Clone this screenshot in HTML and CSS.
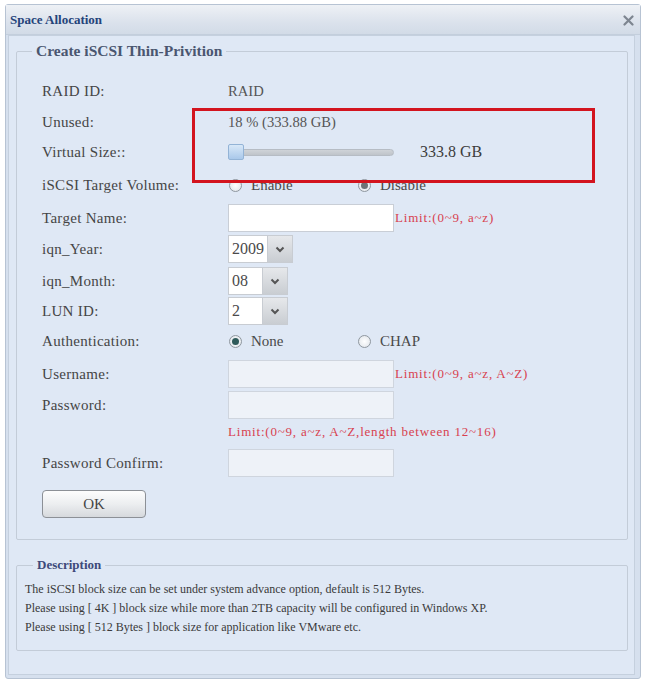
FILE: index.html
```html
<!DOCTYPE html>
<html>
<head>
<meta charset="utf-8">
<link rel="stylesheet" href="styles.css">
</head>
<body>
<div class="dialog">
  <div class="titlebar">
    <span class="title">Space Allocation</span>
    <span class="close">
      <svg width="11" height="11" viewBox="0 0 11 11"><path d="M1.5 1.5 L9.5 9.5 M9.5 1.5 L1.5 9.5" stroke="#7d8590" stroke-width="2.2" stroke-linecap="round"/></svg>
    </span>
  </div>
  <div class="panel">
    <fieldset class="box main">
      <legend>Create iSCSI Thin-Privition</legend>
      <div class="row r1"><span class="label">RAID ID:</span><span class="val">RAID</span></div>
      <div class="row r2"><span class="label">Unused:</span><span class="val">18 % (333.88 GB)</span></div>
      <div class="row r3"><span class="label">Virtual Size::</span>
        <span class="slider"><span class="track"></span><span class="thumb"></span></span>
        <span class="size">333.8 GB</span>
      </div>
      <div class="row r4"><span class="label">iSCSI Target Volume:</span>
        <span class="radios">
          <span class="opt"><span class="radio"></span>Enable</span>
          <span class="opt"><span class="radio on grey"></span>Disable</span>
        </span>
      </div>
      <div class="row r5"><span class="label">Target Name:</span><span class="input white"></span><span class="limit">Limit:(0~9, a~z)</span></div>
      <div class="row r6"><span class="label">iqn_Year:</span>
        <span class="select year"><span class="sv">2009</span><span class="arrow"><svg width="10" height="7" viewBox="0 0 10 7"><path d="M1.5 1.5 L5 5 L8.5 1.5" fill="none" stroke="#555" stroke-width="2"/></svg></span></span>
      </div>
      <div class="row r7"><span class="label">iqn_Month:</span>
        <span class="select small"><span class="sv">08</span><span class="arrow"><svg width="10" height="7" viewBox="0 0 10 7"><path d="M1.5 1.5 L5 5 L8.5 1.5" fill="none" stroke="#555" stroke-width="2"/></svg></span></span>
      </div>
      <div class="row r8"><span class="label">LUN ID:</span>
        <span class="select small"><span class="sv">2</span><span class="arrow"><svg width="10" height="7" viewBox="0 0 10 7"><path d="M1.5 1.5 L5 5 L8.5 1.5" fill="none" stroke="#555" stroke-width="2"/></svg></span></span>
      </div>
      <div class="row r9"><span class="label">Authentication:</span>
        <span class="radios">
          <span class="opt"><span class="radio on teal"></span>None</span>
          <span class="opt"><span class="radio"></span>CHAP</span>
        </span>
      </div>
      <div class="row r10"><span class="label">Username:</span><span class="input pale"></span><span class="limit">Limit:(0~9, a~z, A~Z)</span></div>
      <div class="row r11"><span class="label">Password:</span><span class="input pale"></span></div>
      <div class="row r12"><span class="label"></span><span class="limit nl">Limit:(0~9, a~z, A~Z,length between 12~16)</span></div>
      <div class="row r13"><span class="label">Password Confirm:</span><span class="input pale"></span></div>
      <div class="btnrow"><span class="okbtn">OK</span></div>
    </fieldset>
    <fieldset class="box desc">
      <legend>Description</legend>
      <p>The iSCSI block size can be set under system advance option, default is 512 Bytes.</p>
      <p>Please using [ 4K ] block size while more than 2TB capacity will be configured in Windows XP.</p>
      <p>Please using [ 512 Bytes ] block size for application like VMware etc.</p>
    </fieldset>
  </div>
  <div class="annot"></div>
</div>
</body>
</html>
```
FILE: styles.css
```css
html, body {
  margin: 0;
  padding: 0;
  background: #ffffff;
}
body {
  font-family: "Liberation Serif", "Times New Roman", serif;
  color: #4a4a4a;
}
.dialog {
  position: relative;
  margin: 4px 0 0 5px;
  width: 634px;
  height: 673px;
  border: 1px solid #b7c3d3;
  border-radius: 3px;
  background: #d6e0ee;
  box-sizing: content-box;
}
.titlebar {
  height: 29px;
  display: flex;
  align-items: center;
  justify-content: space-between;
  padding: 0 6px 0 4px;
  background: linear-gradient(#eef1f5, #dbe2ec 60%, #d2dbe7);
  border-bottom: 1px solid #c3cedc;
}
.title {
  font-weight: bold;
  font-size: 13px;
  color: #24437a;
}
.close {
  display: flex;
  align-items: center;
  margin-top: 2px;
}
.panel {
  margin: 0 5px 0 2px;
  height: 640px;
  border: 1px solid #c5d0de;
  background: #dfe8f5;
  padding: 7px 6px 0 7px;
  box-sizing: border-box;
  display: flex;
  flex-direction: column;
}
.box {
  margin: 0;
  border: 1px solid #c3ccd8;
  border-radius: 2px;
  min-width: 0;
}
.box legend {
  font-weight: bold;
  font-size: 13px;
  line-height: 16px;
  color: #3b4b6e;
  padding: 0 4px;
}
.main {
  padding: 16px 0 21px 25px;
}
.main legend {
  margin-left: -10px;
  font-size: 15.5px;
  color: #4a5670;
}
.desc {
  margin-top: 17px;
  padding: 7px 8px 13px 8px;
}
.desc legend {
  margin-left: 8px;
  color: #3d4a7a;
}
.desc p {
  margin: 0;
  font-size: 12px;
  line-height: 19px;
  color: #3a3a3a;
}
.row {
  display: flex;
  align-items: center;
  font-size: 15px;
}
.label {
  width: 186px;
  flex: none;
  color: #454545;
  letter-spacing: 0.3px;
}
.val { color: #555; font-size: 14.6px; }
.r1 { height: 32px; }
.r2 { height: 30px; }
.r3 { height: 30px; }
.r4 { height: 36px; }
.r5 { height: 30px; }
.r6 { height: 32px; }
.r7 { height: 32px; }
.r8 { height: 28px; }
.r9 { height: 32px; }
.r10 { height: 34px; }
.r11 { height: 28px; }
.r12 { height: 26px; }
.r13 { height: 36px; }
.slider {
  position: relative;
  width: 166px;
  height: 16px;
  display: flex;
  align-items: center;
}
.track {
  width: 166px;
  height: 7px;
  border-radius: 4px;
  background: linear-gradient(#cfd3d8, #bfc4ca);
  border: 1px solid #b6bcc4;
  box-sizing: border-box;
}
.thumb {
  position: absolute;
  left: 0;
  top: 0;
  width: 16px;
  height: 16px;
  border: 1px solid #93b3d6;
  border-radius: 2px;
  background: linear-gradient(#d8e8f8, #a9c8ea);
  box-sizing: border-box;
}
.size {
  margin-left: 26px;
  font-size: 16px;
  color: #3c3c3c;
}
.radios {
  display: flex;
  align-items: center;
}
.opt {
  display: flex;
  align-items: center;
  width: 129px;
  color: #4a4a4a;
  font-size: 15px;
}
.radio {
  width: 11px;
  height: 11px;
  border: 1px solid #8f979f;
  border-radius: 50%;
  background: radial-gradient(#ffffff, #dde2e8);
  margin-right: 9px;
  margin-left: 1px;
  position: relative;
  flex: none;
}
.radio.on::after {
  content: "";
  position: absolute;
  left: 2px;
  top: 2px;
  width: 7px;
  height: 7px;
  border-radius: 50%;
}
.radio.grey::after { background: #6e7478; }
.radio.teal::after { background: #2f5b5b; }
.input {
  width: 166px;
  height: 28px;
  box-sizing: border-box;
  border: 1px solid #c9ced6;
  flex: none;
}
.input.white { background: #ffffff; }
.input.pale { background: #eef2f8; border-color: #cfd5de; }
.limit {
  font-size: 13px;
  letter-spacing: 0.8px;
  color: #d8414f;
  margin-left: 1px;
}
.limit.nl { margin-left: 0; }
.select {
  display: flex;
  height: 28px;
  box-sizing: border-box;
  border: 1px solid #c8ccd2;
  background: #ffffff;
}
.select.year { width: 65px; }
.select.small { width: 60px; }
.sv {
  flex: 1;
  display: flex;
  align-items: center;
  padding-left: 3px;
  font-size: 16px;
  color: #4a4a4a;
}
.arrow {
  width: 24px;
  display: flex;
  align-items: center;
  justify-content: center;
  background: linear-gradient(#e6e8eb, #c9cdd2);
  border-left: 1px solid #c8ccd2;
}
.btnrow {
  margin-top: 9px;
  height: 28px;
  display: flex;
}
.okbtn {
  width: 104px;
  height: 28px;
  box-sizing: border-box;
  border: 1px solid #8c9096;
  border-radius: 4px;
  background: linear-gradient(#fdfdfd, #eceef0 50%, #d6d9dd);
  display: flex;
  align-items: center;
  justify-content: center;
  font-size: 15px;
  color: #444;
}
.annot {
  position: absolute;
  left: 186px;
  top: 103px;
  width: 403px;
  height: 75px;
  border: 3px solid #d3141e;
  box-sizing: border-box;
}
```
